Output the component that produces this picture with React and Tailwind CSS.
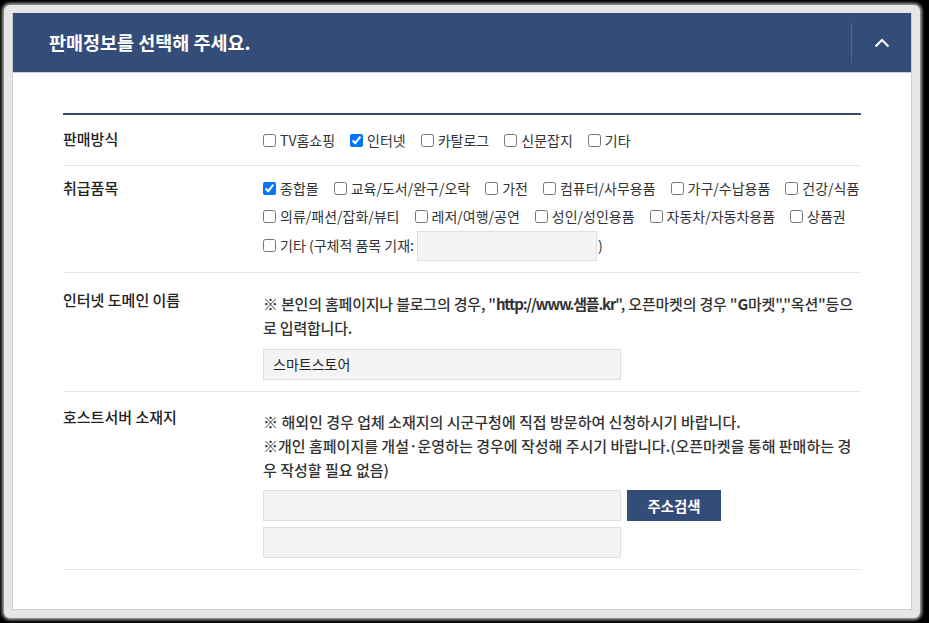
const font = { fontFamily: '"Noto Sans CJK KR", "Noto Sans", sans-serif' };

function Check({ label, checked, last }) {
  return (
    <label className={`flex items-center whitespace-nowrap ${last ? '' : 'mr-[15px]'}`}>
      <input type="checkbox" defaultChecked={checked} className="w-[13px] h-[13px] mr-[4px] accent-[#0075ff]" />
      <span>{label}</span>
    </label>
  );
}

function Row({ label, children, className = '', labelClass = '' }) {
  return (
    <div className={`flex border-b border-[#e6e6e6] ${className}`}>
      <div className={`w-[200px] shrink-0 text-[15px] font-medium text-[#222] ${labelClass}`}>{label}</div>
      <div className="flex-1 text-[14px] text-[#333]">{children}</div>
    </div>
  );
}

export default function App() {
  return (
    <div className="w-[929px] h-[623px] bg-black pt-[5px] pl-[4px]" style={font}>
      <div className="w-[916px] h-[613px] rounded-[6px] bg-[#e6e6e6] p-[8px] shadow-[0_0_3px_2px_#a0a0a0]">
        <div className="w-[900px] h-[597px] bg-white border border-[#d0d0d0] border-t-0">
          {/* header */}
          <div className="flex h-[60px] bg-[#344d78] border-b border-[#d0d0d0]">
            <div className="flex-1 flex items-center pl-[36px] text-[18.5px] font-bold text-white">
              판매정보를 선택해 주세요.
            </div>
            <div className="w-[60px] flex items-center justify-center self-center h-[40px] border-l border-[#4d6592]">
              <svg width="16" height="10" viewBox="0 0 16 10" fill="none">
                <polyline points="1.5,8.5 8,2 14.5,8.5" stroke="white" strokeWidth="2" />
              </svg>
            </div>
          </div>

          <div className="px-[50px] pt-[40px]">
            <div className="h-[2px] bg-[#344d78]" />

            <Row label="판매방식" className="py-[11px]" labelClass="leading-[26px]">
              <div className="flex h-[28px] items-center">
                <Check label="TV홈쇼핑" />
                <Check label="인터넷" checked />
                <Check label="카탈로그" />
                <Check label="신문잡지" />
                <Check label="기타" last />
              </div>
            </Row>

            <Row label="취급품목" className="pt-[8px] pb-[11px]" labelClass="leading-[28px]">
              <div className="flex h-[28px] items-center">
                <Check label="종합몰" checked />
                <Check label="교육/도서/완구/오락" />
                <Check label="가전" />
                <Check label="컴퓨터/사무용품" />
                <Check label="가구/수납용품" />
                <Check label="건강/식품" last />
              </div>
              <div className="flex h-[28px] items-center">
                <Check label="의류/패션/잡화/뷰티" />
                <Check label="레저/여행/공연" />
                <Check label="성인/성인용품" />
                <Check label="자동차/자동차용품" />
                <Check label="상품권" last />
              </div>
              <div className="flex h-[31px] items-center">
                <label className="flex items-center whitespace-nowrap">
                  <input type="checkbox" className="w-[13px] h-[13px] mr-[4px]" />
                  <span>기타 (구체적 품목 기재:</span>
                </label>
                <div className="w-[180px] h-[30px] bg-[#f4f4f4] border border-[#dedede] ml-[3px] mr-[1px]" />
                <span>)</span>
              </div>
            </Row>

            <Row label="인터넷 도메인 이름" className="pt-[15px] pb-[11px]" labelClass="leading-[24px]">
              <p className="mt-[4px] leading-[24px] font-medium text-[15px] tracking-[-0.2px]">
                ※ 본인의 홈페이지나 블로그의 경우, "<b className="tracking-[-1.2px]">http://www.샘플.kr</b>", 오픈마켓의 경우 "<b>G</b>마켓","옥션"등으로 입력합니다.
              </p>
              <div className="mt-[9px] w-[358px] h-[31px] bg-[#f4f4f4] border border-[#dedede] flex items-center pl-[9px] text-[14px] text-[#222]">
                스마트스토어
              </div>
            </Row>

            <Row label="호스트서버 소재지" className="pt-[13px] pb-[11px]" labelClass="leading-[24px]">
              <div className="mt-[5px] leading-[24px] font-medium text-[15px]">
                <p>※ 해외인 경우 업체 소재지의 시군구청에 직접 방문하여 신청하시기 바랍니다.</p>
                <p>※개인 홈페이지를 개설·운영하는 경우에 작성해 주시기 바랍니다.(오픈마켓을 통해 판매하는 경우 작성할 필요 없음)</p>
              </div>
              <div className="mt-[8px] flex gap-[6px]">
                <div className="w-[358px] h-[31px] bg-[#f4f4f4] border border-[#dedede]" />
                <button className="w-[94px] h-[31px] bg-[#344d78] text-white text-[14.4px] font-bold">주소검색</button>
              </div>
              <div className="mt-[6px] w-[358px] h-[31px] bg-[#f4f4f4] border border-[#dedede]" />
            </Row>
          </div>
        </div>
      </div>
    </div>
  );
}
